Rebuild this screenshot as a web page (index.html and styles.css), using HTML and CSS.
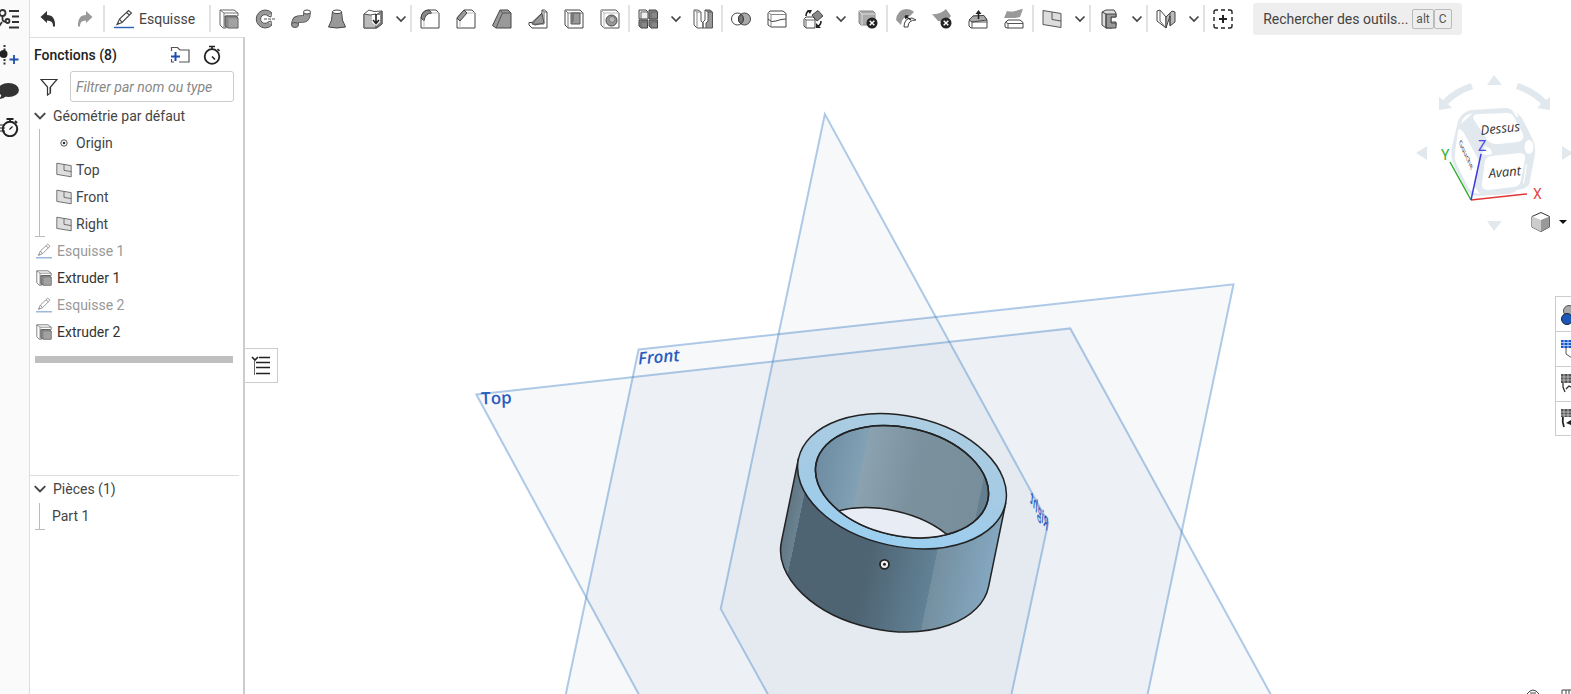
FILE: index.html
```html
<!DOCTYPE html>
<html lang="fr">
<head>
<meta charset="utf-8">
<title>Atelier de pièces</title>
<link rel="stylesheet" href="styles.css">
</head>
<body>
<svg class="defs" aria-hidden="true">
  <symbol id="chev" viewBox="0 0 12 12"><path d="M1.500 3.500 6 8l4.500-4.500" fill="none" stroke="#444" stroke-width="1.700"/></symbol>
  <symbol id="extrude" viewBox="0 0 20 20"><path d="M1 1h14l4 3v3H7v12H4l-3-3z" fill="#fff" stroke="#666"/><path d="M1 1l4 3h14M5 4v15" fill="none" stroke="#777"/><path d="M6 7h11l2 2v10H9l-3-2z" fill="#888" stroke="#555"/><path d="M9.500 9.500h9v9h-9z" fill="#a2a2a2"/></symbol>
  <symbol id="pencil" viewBox="0 0 20 20"><path d="M3 15.500 5.500 10 14.500 1.500l3 2.500L8 13.500z M5.500 10 8 13.500M12.500 3.500l3 2.500" fill="#fff" stroke="#444" stroke-width="1.100"/><path d="M3 15.500l1-2.500 1.500 1.500z" fill="#444"/><path d="M0 18.500h20" stroke="#2863b8" stroke-width="1.400"/></symbol>
  <symbol id="plane" viewBox="0 0 20 20"><path d="M1 1.500 19 4.500v14L1 15.500z" fill="#ddd" stroke="#555"/><path d="M10 3v7.500l9 1.500" fill="none" stroke="#555"/></symbol>
  <symbol id="xmark" viewBox="0 0 12 12"><circle cx="6" cy="6" r="5.500" fill="#222"/><path d="M3.700 3.700l4.600 4.600M8.300 3.700 3.700 8.300" stroke="#fff" stroke-width="1.400"/></symbol>
</svg>

<nav class="rail" aria-label="Panneaux">
  <button aria-label="Arbre"><svg width="20" height="20" viewBox="0 0 20 20" fill="none" stroke="#333" stroke-width="1.800"><circle cx="2.500" cy="4" r="3"/><path d="M2.500 7v3q0 3 4 2.500M-2 19l4-6"/><circle cx="7.500" cy="12" r="2"/><path d="M9 2h10M12 7.500h7M12 13h7M9 18.500h10"/></svg></button>
  <button aria-label="Ajouter une version"><svg width="20" height="20" viewBox="0 0 20 20"><path d="M4.500 0v20" stroke="#333" stroke-width="2" stroke-dasharray="2 1.500"/><circle cx="3.500" cy="9" r="4" fill="#222"/><path d="M9.500 14.500h9M14 10v9" stroke="#1b4fae" stroke-width="1.800"/></svg></button>
  <button aria-label="Commentaires"><svg width="20" height="20" viewBox="0 0 20 20"><ellipse cx="8.500" cy="9" rx="10.500" ry="7" fill="#333"/><path d="M1 13q1 3-3 5 6 0 8-3z" fill="#333"/></svg></button>
  <button aria-label="Historique"><svg width="20" height="20" viewBox="0 0 20 20" fill="none" stroke="#222"><circle cx="10" cy="12" r="7.200" stroke-width="2"/><path d="M6.500 2h7M10 2v3M15 4l2 2" stroke-width="1.800"/><path d="M9.500 12.500 12.500 9.500M0 8h5M-1 11h6M0 14h5" stroke-width="1.200"/></svg></button>
</nav>

<div class="app">
  <header class="toolbar">
    <div class="group history">
      <button class="tool" aria-label="Annuler"><svg viewBox="0 0 20 20"><path d="M2.500 8 9 2v4q8.500 0 8 11.500h-2q.5-6-6-6V14z" fill="#333"/></svg></button>
      <button class="tool" aria-label="Rétablir"><svg viewBox="0 0 20 20"><path d="M17.500 8 11 2v4q-8.500 0-8 11.500h2q-.5-6 6-6V14z" fill="#999"/></svg></button>
    </div>
    <div class="group sketch">
      <button class="sketch-btn"><svg viewBox="0 0 20 20"><use href="#pencil"/></svg>Esquisse</button>
    </div>
    <div class="group">
      <button class="tool" aria-label="Extruder"><svg viewBox="0 0 20 20"><use href="#extrude"/></svg></button>
      <button class="tool" aria-label="Révolution"><svg viewBox="0 0 20 20"><path d="M16.500 3.500A9 9 0 1 0 16.500 16.500L13 13A4.300 4.300 0 1 1 13 7z" fill="#999" stroke="#555"/><path d="M16.500 3.500l-.5 4.500-3-1M16.500 16.500l-.5-4.500-3 1" fill="#ddd" stroke="#555"/><path d="M9 10h11" stroke="#555" stroke-dasharray="3 1"/></svg></button>
      <button class="tool" aria-label="Balayage"><svg viewBox="0 0 20 20"><path d="M4 15.500c0-6 4-5.500 7-5.500 4 0 5-1 5-6" fill="none" stroke="#444" stroke-width="7.500"/><path d="M4 15.500c0-6 4-5.500 7-5.500 4 0 5-1 5-6" fill="none" stroke="#999" stroke-width="6"/><ellipse cx="16" cy="3" rx="3.500" ry="2" fill="#fff" stroke="#444"/><ellipse cx="4" cy="16" rx="3.500" ry="2.500" fill="#999" stroke="#555"/></svg></button>
      <button class="tool" aria-label="Lissage"><svg viewBox="0 0 20 20"><path d="M5.500 2.500Q5.500 12 1.500 18q8.500 2 17 0-4-6-4-15.500z" fill="#999" stroke="#444"/><ellipse cx="10" cy="2.800" rx="4.500" ry="1.800" fill="#fff" stroke="#444"/></svg></button>
      <button class="tool" aria-label="Épaissir"><svg viewBox="0 0 20 20"><path d="M1 5l5-4 5 1.500 8-.5v13l-5 4H1z" fill="#fff" stroke="#555"/><path d="M1 5l6 1 6-1v14H1z" fill="#bbb" stroke="#555"/><path d="M13 6l6-4v13l-6 4z" fill="#888" stroke="#555"/><path d="M9 6h8v7l-4 4-4-4z" fill="#fff"/><path d="M13 5v9M10 11l3 3.500 3-3.500" fill="none" stroke="#222" stroke-width="1.600"/></svg></button>
      <button class="more" aria-label="Plus"><svg viewBox="0 0 12 12"><use href="#chev"/></svg></button>
    </div>
    <div class="group">
      <button class="tool" aria-label="Congé"><svg viewBox="0 0 20 20"><path d="M1 19V9Q2 1 9 1h7l3 3v15z" fill="#fff" stroke="#444"/><path d="M1 9Q2 1 9 1l3 3Q5 4 4 12z" fill="#888" stroke="#444"/><path d="M11 4h8M4 11v8" stroke="#bbb"/></svg></button>
      <button class="tool" aria-label="Chanfrein"><svg viewBox="0 0 20 20"><path d="M1 19V9l7-8h8l3 3v15z" fill="#fff" stroke="#444"/><path d="M1 9l7-8 3 3-7 8z" fill="#999" stroke="#444"/><path d="M11 4h8M4 12v7" stroke="#bbb"/></svg></button>
      <button class="tool" aria-label="Dépouille"><svg viewBox="0 0 20 20"><path d="M.5 16.500 8 1h8l3 3v15H4z" fill="#999" stroke="#444"/><path d="M4 19 10.500 4H19M10.500 4 8 1" fill="none" stroke="#555"/></svg></button>
      <button class="tool" aria-label="Nervure"><svg viewBox="0 0 20 20"><path d="M14 1h2.500L19 3v16H4l-3-3v-2.500h3L14 4z" fill="#fff" stroke="#444"/><path d="M4 14.500 14 4.500l2 9.500-9 2z" fill="#999" stroke="#444"/><path d="M14 1l2 2.500V15H4M16 3h3" fill="none" stroke="#666"/></svg></button>
      <button class="tool" aria-label="Coque"><svg viewBox="0 0 20 20"><path d="M1 1h15l3 3v15H4l-3-3z" fill="#fff" stroke="#444"/><path d="M1 1l3 3h15M4 4v15" fill="none" stroke="#777"/><path d="M7 4h9v11H7z" fill="#999" stroke="#555"/><path d="M7 4h3v8l-3 3z" fill="#777"/></svg></button>
      <button class="tool" aria-label="Perçage"><svg viewBox="0 0 20 20"><path d="M1 1h15l3 3v15H4l-3-3z" fill="#fff" stroke="#555"/><path d="M1 1l3 3h15M4 4v15" fill="none" stroke="#bbb"/><circle cx="11.500" cy="11.500" r="5.500" fill="#999" stroke="#444"/><circle cx="12" cy="10.500" r="3" fill="#bbb" stroke="#777"/></svg></button>
    </div>
    <div class="group">
      <button class="tool" aria-label="Répétition linéaire"><svg viewBox="0 0 20 20"><path d="M1 1h7l2 2v7H1z" fill="#eee" stroke="#444"/><path d="M11 1h7l1.500 2v7H11zM1 11h8.500v8H3l-2-2zM11 11h8.500v8H13l-2-2z" fill="#888" stroke="#444"/><path d="M3 3h7M3 3v7M13 3h6M13 3v7M3 13h7M3 13v6M13 13h6M13 13v6" stroke="#666"/></svg></button>
      <button class="more" aria-label="Plus"><svg viewBox="0 0 12 12"><use href="#chev"/></svg></button>
      <button class="tool" aria-label="Symétrie"><svg viewBox="0 0 20 20"><path d="M1 1h4l3 2v9l2 2v5H4l-3-3z" fill="#fff" stroke="#555"/><path d="M1 1l3 2h4M4 3v16" fill="none" stroke="#888"/><path d="M12 1h5l2.500 2v16H13v-5l2-2V3z" fill="#999" stroke="#555"/><path d="M12 1v10l-2 2v6h3M15 3h4" fill="none" stroke="#555"/></svg></button>
    </div>
    <div class="group">
      <button class="tool" aria-label="Booléen"><svg viewBox="0 0 20 20"><circle cx="6.500" cy="10" r="6" fill="#fff" stroke="#444"/><circle cx="13.500" cy="10" r="6" fill="#aaa" stroke="#444"/><path d="M10 5.100a6 6 0 0 1 0 9.800 6 6 0 0 1 0-9.800z" fill="#777" stroke="#333"/></svg></button>
      <button class="tool" aria-label="Diviser"><svg viewBox="0 0 20 20"><path d="M1 4l2-2h13l3 2.500V18H4l-3-2z" fill="#fff" stroke="#444"/><path d="M1 3l3 2.500h15M4 5v13" fill="none" stroke="#888"/><path d="M1 10q3 4 8 2t10-2" fill="none" stroke="#444"/></svg></button>
      <button class="tool" aria-label="Transformer"><svg viewBox="0 0 20 20"><path d="M1 10l2-2h7l2 2v9H3l-2-2z" fill="#fff" stroke="#444"/><path d="M1 9l2 2h9M3 11v8" fill="none" stroke="#666"/><path d="M9 6l6-4.500L20 7l-6 5z" fill="#888" stroke="#444"/><path d="M3 7q0-4 3-5" fill="none" stroke="#222" stroke-width="1.600"/><path d="M4 1h5L7 5z" fill="#222"/><path d="M18 12q0 4-3 5" fill="none" stroke="#222" stroke-width="1.600"/><path d="M13 14v5h5z" fill="#222"/></svg></button>
      <button class="more" aria-label="Plus"><svg viewBox="0 0 12 12"><use href="#chev"/></svg></button>
      <button class="tool" aria-label="Supprimer la pièce"><svg viewBox="0 0 20 20"><path d="M1 2h14l2 2v12H3l-2-2z" fill="#aaa" stroke="#888"/><path d="M1 2l3 3h13M4 5v11" fill="none" stroke="#ddd"/><use href="#xmark" x="8" y="8" width="12" height="12"/></svg></button>
    </div>
    <div class="group">
      <button class="tool" aria-label="Modifier le congé"><svg viewBox="0 0 20 20"><path d="M0 11Q1 1 10 0q5 0 8 3l-4 4Q6 7 5 16z" fill="#999"/><path d="M8 18q0-9 8-9l4 2q-8 0-8 7z" fill="#fff" stroke="#444"/><path d="M15 11 9 7M9 7h3.500M9 7l1 3" fill="none" stroke="#222" stroke-width="1.300"/></svg></button>
      <button class="tool" aria-label="Supprimer la face"><svg viewBox="0 0 20 20"><path d="M0 5Q8 6 14 0l5 7q-5 7-13 5z" fill="#999"/><use href="#xmark" x="8" y="8" width="12" height="12"/></svg></button>
      <button class="tool" aria-label="Déplacer la face"><svg viewBox="0 0 20 20"><path d="M1 12l4-5h11l3 4v8H3l-2-2z" fill="#fff" stroke="#444"/><path d="M1 11l4-4 11-.5 3 4.500-15 2z" fill="#aaa" stroke="#444"/><path d="M4 13v6M4 13h15" stroke="#555"/><path d="M10.500 10V3" stroke="#222" stroke-width="1.600"/><path d="M7.500 5l3-4 3 4z" fill="#222"/></svg></button>
      <button class="tool" aria-label="Remplacer la face"><svg viewBox="0 0 20 20"><path d="M3 2q5 1 8 0t8-2l-3 8q-4 1-8 1T0 9z" fill="#999"/><path d="M1 14l3-3h12l3 2.500V19H3l-2-1z" fill="#fff" stroke="#444"/><path d="M1 13l3 1.500h15M4 14v5" fill="none" stroke="#555"/></svg></button>
    </div>
    <div class="group">
      <button class="tool" aria-label="Plan"><svg viewBox="0 0 20 20"><use href="#plane"/></svg></button>
      <button class="more" aria-label="Plus"><svg viewBox="0 0 12 12"><use href="#chev"/></svg></button>
    </div>
    <div class="group">
      <button class="tool" aria-label="Tôlerie"><svg viewBox="0 0 20 20"><path d="M3 3l4-2h8l2 3v4h-5v5h5v4l-4 2H7l-4-3z" fill="#ddd" stroke="#444"/><path d="M7 5h10v3h-5v6h5v5H7z" fill="#999" stroke="#444"/><path d="M3 3l4 2v14" fill="none" stroke="#444"/></svg></button>
      <button class="more" aria-label="Plus"><svg viewBox="0 0 12 12"><use href="#chev"/></svg></button>
    </div>
    <div class="group">
      <button class="tool" aria-label="Cadre"><svg viewBox="0 0 20 20"><path d="M1 2l3-1 6 7v11l-9-7z" fill="#fff" stroke="#444"/><path d="M4 1v11l6 7" fill="none" stroke="#666"/><path d="M10 8l6-6 3 1v10l-5 4V7l-4 12z" fill="#bbb" stroke="#444"/><path d="M14 4v12" stroke="#444"/></svg></button>
      <button class="more" aria-label="Plus"><svg viewBox="0 0 12 12"><use href="#chev"/></svg></button>
    </div>
    <div class="group last">
      <button class="tool" aria-label="Fonction personnalisée"><svg viewBox="0 0 20 20" fill="none" stroke="#222"><path d="M1 5V3q0-2 2-2h2M8 1h4M15 1h2q2 0 2 2v2M19 8v4M19 15v2q0 2-2 2h-2M12 19H8M5 19H3q-2 0-2-2v-2M1 12V8" stroke-width="1.400"/><path d="M6 10h8M10 6v8" stroke-width="2"/></svg></button>
    </div>
    <button class="search">Rechercher des outils...<span class="keys"><kbd>alt</kbd><kbd>C</kbd></span></button>
  </header>

  <div class="work">
    <aside class="panel">
      <section class="features">
        <div class="head">
          <h2>Fonctions (8)</h2>
          <button aria-label="Nouveau dossier"><svg width="20" height="20" viewBox="0 0 20 20" fill="none"><path d="M1.500 6V2.500h6L10 5h9v12H9M1.500 14v3H4" stroke="#555" stroke-width="1.200"/><path d="M1 11.500h9M5.500 7v9" stroke="#1b4fae" stroke-width="2"/></svg></button>
          <button aria-label="Chronomètre"><svg width="20" height="20" viewBox="0 0 20 20" fill="none" stroke="#222"><circle cx="10" cy="11.500" r="7.300" stroke-width="1.800"/><path d="M7 1.500h6M10 1.500V4M15.500 4l2 2M10 11.500l3 3" stroke-width="1.600"/></svg></button>
        </div>
        <div class="filter">
          <button aria-label="Filtrer"><svg width="18" height="18" viewBox="0 0 18 18"><path d="M1 1.500h16l-6.500 7.500v6l-3 2V9z" fill="#fff" stroke="#333" stroke-width="1.200"/><path d="M9 9h1v6l-1 1z" fill="#999"/></svg></button>
          <input type="text" placeholder="Filtrer par nom ou type" aria-label="Filtrer par nom ou type">
        </div>
        <div class="row title"><svg viewBox="0 0 12 12"><use href="#chev"/></svg>Géométrie par défaut</div>
        <ul class="branch">
          <li class="row"><svg viewBox="0 0 16 16"><circle cx="8" cy="8" r="3.200" fill="#fff" stroke="#555"/><circle cx="8" cy="8" r="1.300" fill="#333"/></svg>Origin</li>
          <li class="row"><svg viewBox="0 0 20 20"><use href="#plane"/></svg>Top</li>
          <li class="row"><svg viewBox="0 0 20 20"><use href="#plane"/></svg>Front</li>
          <li class="row"><svg viewBox="0 0 20 20"><use href="#plane"/></svg>Right</li>
        </ul>
        <ul class="steps">
          <li class="row muted"><svg viewBox="0 0 20 20"><use href="#pencil"/></svg>Esquisse 1</li>
          <li class="row"><svg viewBox="0 0 20 20"><use href="#extrude"/></svg>Extruder 1</li>
          <li class="row muted"><svg viewBox="0 0 20 20"><use href="#pencil"/></svg>Esquisse 2</li>
          <li class="row"><svg viewBox="0 0 20 20"><use href="#extrude"/></svg>Extruder 2</li>
        </ul>
        <div class="rollback"></div>
      </section>
      <section class="parts">
        <div class="row title"><svg viewBox="0 0 12 12"><use href="#chev"/></svg>Pièces (1)</div>
        <ul class="branch"><li class="row">Part 1</li></ul>
      </section>
    </aside>

    <main class="stage">
      <svg class="scene" viewBox="244 38 1327 656" preserveAspectRatio="xMinYMin slice">
        <defs>
          <linearGradient id="outer" gradientUnits="userSpaceOnUse" x1="796" y1="459" x2="1004" y2="502">
            <stop offset="0" stop-color="#607684"/><stop offset=".064" stop-color="#6b8290"/><stop offset=".064" stop-color="#4e6473"/><stop offset=".42" stop-color="#4e6473"/><stop offset=".73" stop-color="#628195"/><stop offset=".73" stop-color="#748f9f"/><stop offset="1" stop-color="#84a7c0"/>
          </linearGradient>
          <linearGradient id="inner" gradientUnits="userSpaceOnUse" x1="796" y1="459" x2="1004" y2="502" gradientTransform="rotate(-12.300 900 482)">
            <stop offset=".08" stop-color="#6d8ba1"/><stop offset=".302" stop-color="#82a1b5"/><stop offset=".304" stop-color="#8ba2b1"/><stop offset=".55" stop-color="#7c919e"/><stop offset=".872" stop-color="#798e9b"/><stop offset=".876" stop-color="#647f90"/>
          </linearGradient>
          <linearGradient id="rim" x1="0" y1="0" x2="0" y2="1"><stop offset="0" stop-color="#accde2"/><stop offset=".6" stop-color="#a3cae5"/><stop offset="1" stop-color="#9bcff0"/></linearGradient>
          <clipPath id="bore"><ellipse cx="900" cy="482" rx="87.700" ry="54" transform="rotate(12.300 900 482)"/></clipPath>
        </defs>
        <g class="planes">
          <path d="M475 395 1068 329 1274 705H643z"/>
          <path d="M637 350 1231 285 1143 705H562z"/>
          <path d="M823 115 1046 523 1007 705H772L719 609z"/>
        </g>
        <g stroke="#222" stroke-width="1.500">
          <path d="M796.500 459.500 779.500 542.500A105.800 65.100 12.300 0 0 986.500 586.500L1003.500 503.500z" fill="url(#outer)"/>
          <ellipse cx="900" cy="481.500" rx="105.800" ry="65.100" transform="rotate(12.300 900 481.500)" fill="url(#rim)"/>
          <ellipse cx="900" cy="482" rx="87.700" ry="54" transform="rotate(12.300 900 482)" fill="url(#inner)"/>
          <g clip-path="url(#bore)"><ellipse cx="882" cy="564" rx="87.700" ry="54" transform="rotate(12.300 882 564)" fill="#e8ecf4"/></g>
          <ellipse cx="900" cy="482" rx="87.700" ry="54" transform="rotate(12.300 900 482)" fill="none"/>
        </g>
        <circle cx="882.500" cy="564.500" r="4.500" fill="#eee" stroke="#222" stroke-width="1.800"/><circle cx="882.500" cy="564.500" r="1.500" fill="#222"/>
        <g class="plane-names">
          <text transform="translate(637 365) rotate(-5)">Front</text>
          <text class="upright" transform="translate(480 405) rotate(-2)">Top</text>
          <text class="small" transform="matrix(-.5 -.87 -.2 .98 1045 532)">Right</text>
        </g>
      </svg>

      <svg class="viewcube" width="160" height="170" viewBox="1411 68 160 170" role="img" aria-label="Cube de vue">
        <g fill="#e1e8ee">
          <path d="M1494 76l8 10h-15zM1494 232l8-10h-15zM1416 154l11-7v14zM1573 154l-11-7v14z"/>
          <path d="M1439 98v13l13-2-4-4q10-10 25-15l-2-6q-18 6-28 17z"/>
          <path d="M1550 98v13l-13-2 4-4q-10-10-25-15l2-6q18 6 28 17z"/>
          <path d="M1458 122q4-9 13-11l34-2q6 0 9 4l4 2q4 3 6 8l9 18q3 7 2 14l-5 27q-1 6-7 8l-6 1q-3 3-9 4l-29 2q-10 0-14-8l-10-20q-5-10-3-21z"/>
        </g>
        <g fill="#fff">
          <path d="M1474 121q-3-5 4-6l29-1q5 0 7 4l9 17q2 6-5 8l-19 2q-9 1-13-6z"/>
          <path d="M1485 162q1-4 6-5l29-3q6 0 5 6l-4 21q-1 6-7 7l-26 3q-7 0-6-7z"/>
          <path d="M1458 132q1-5 6 2l13 24q2 4 1 8l-4 22q-2 7-6 0l-12-24q-2-5-1-10z"/>
          <path d="M1461 125l12-11-6 2q-5 3-6 9zM1458 160l10 20-5-3zM1468 188l6 6 6 1-5-7z"/>
          <ellipse cx="1529" cy="148" rx="4.500" ry="7"/><path d="M1485 147q7 2 7 8-5 2-10 0zM1512 111l5 8 1-3zM1523 184l3-20 1 2-3 19z"/>
        </g>
        <g class="faces">
          <text transform="translate(1481 136) rotate(-6)">Dessus</text>
          <text transform="translate(1489 179) rotate(-5)">Avant</text>
          <text class="side" transform="matrix(.42 .9 -.2 .98 1459 145)">Gauche</text>
        </g>
        <g fill="none" stroke-width="1.500"><path d="M1471 201 1527 195" stroke="#e03636"/><path d="M1471 201 1450 163" stroke="#2fb02f"/><path d="M1471 201 1481 155" stroke="#3c3ce0"/></g>
        <g class="axes"><text x="1533" y="200" fill="#e04848">X</text><text x="1441" y="161" fill="#2fb02f">Y</text><text x="1478" y="152" fill="#4848e0">Z</text></g>
      </svg>

      <button class="shade" aria-label="Mode d'affichage"><svg width="41" height="22" viewBox="0 0 41 22"><path d="M2 5.500 11 1.500l8.500 4V16L11 20.500 2 16z" fill="#fff" stroke="#333"/><path d="M2 5.500 11 9v11.500L2 16z" fill="#ccc"/><path d="M11 9l8.500-3.500V16L11 20.500z" fill="#999"/><path d="M29 9h8l-4 4z" fill="#111"/></svg></button>

      <div class="side-tabs">
        <button aria-label="Apparences"><svg width="16" height="34" viewBox="0 0 16 34"><circle cx="14" cy="14" r="5.500" fill="#aaa" stroke="#555"/><circle cx="12" cy="22" r="5.500" fill="#1c57b8" stroke="#123"/></svg></button>
        <button aria-label="Configurations"><svg width="16" height="34" viewBox="0 0 16 34"><path d="M11 15v7l6 4M11 16l5-2" fill="none" stroke="#555"/><path d="M6 8h12v8H6z" fill="#1c57c8"/><path d="M6 10.500h11M6 13.500h11M9 8v8M13 8v8" stroke="#cfe0ff" stroke-width=".8"/></svg></button>
        <button aria-label="Nomenclature"><svg width="16" height="34" viewBox="0 0 16 34"><path d="M8 16v4l2 5M11 22l3-3 4 2" fill="none" stroke="#333" stroke-width="1.300"/><path d="M6 7h12v9H6z" fill="#555"/><path d="M6 10h11M6 13h11M9 7v9M13 7v9" stroke="#ccc" stroke-width=".8"/></svg></button>
        <button aria-label="Variables"><svg width="16" height="33" viewBox="0 0 16 33"><path d="M8 14q-1 6 1 11" fill="none" stroke="#222" stroke-width="1.800"/><path d="M11 21l5-3v5z" fill="#222"/><path d="M6 7h12v8H6z" fill="#555"/><path d="M6 10h11M6 13h11M9 7v8M13 7v8" stroke="#ccc" stroke-width=".8"/></svg></button>
      </div>

      <button class="fold" aria-label="Replier la liste"><svg width="20" height="20" viewBox="0 0 20 20" fill="none" stroke="#222"><path d="M1 1l3 3 3-3" stroke-width="1.600"/><path d="M8 1.500h11M5 6.500h14M5 11.500h14M5 17.500h14" stroke-width="1.400"/><path d="M3.500 5v14" stroke="#666"/></svg></button>
      <svg class="corner" width="48" height="5" viewBox="0 0 48 5" fill="none" stroke="#444"><path d="M4 5q6-8 12 0M7 4h6" /><path d="M39 6V1h10M43 1v5M46 1v5"/></svg>
    </main>
  </div>
</div>
</body>
</html>
```

FILE: styles.css
```css
* { box-sizing: border-box; }
body {
  margin: 0;
  height: 100vh;
  display: flex;
  overflow: hidden;
  background: #fff;
  color: #444;
  font: 14px/20px Roboto, "Liberation Sans", sans-serif;
}
button {
  padding: 0;
  border: 0;
  background: none;
  color: inherit;
  font: inherit;
}
button svg { display: block; }
ul { margin: 0; padding: 0; list-style: none; }
.defs { position: absolute; width: 0; height: 0; }

.rail {
  flex: 0 0 30px;
  display: flex;
  flex-direction: column;
  align-items: flex-start;
  gap: 16px;
  padding-top: 9px;
  background: #fafafa;
  border-right: 1px solid #ddd;
}
.app { flex: 1; min-width: 0; display: flex; flex-direction: column; }

.toolbar { flex: 0 0 37px; display: flex; align-items: center; white-space: nowrap; }
.group { display: flex; align-items: center; height: 27px; border-left: 2px solid #e2e2e2; }
.history { border-left: 0; }
.tool, .more { display: flex; align-items: center; justify-content: center; height: 27px; }
.tool { width: 36px; }
.tool svg { width: 20px; height: 20px; }
.more { width: 19px; }
.more svg { width: 12px; height: 12px; }
.history .tool:last-child { width: 37px; }
.sketch-btn { display: flex; align-items: center; gap: 5px; padding: 0 14px 0 9px; }
.sketch-btn svg { width: 20px; height: 20px; }
.search {
  display: flex;
  align-items: center;
  gap: 4px;
  height: 32px;
  margin-left: 12px;
  padding: 0 10px;
  border-radius: 3px;
  background: #eee;
}
.keys { display: flex; }
kbd {
  min-width: 18px;
  padding: 0 3px;
  border: 1px solid #bbb;
  border-radius: 2px;
  font: 12px/18px Roboto, "Liberation Sans", sans-serif;
  color: #555;
  text-align: center;
}

.work { flex: 1; min-height: 0; display: flex; }
.panel {
  flex: 0 0 215px;
  min-width: 0;
  display: flex;
  flex-direction: column;
  border-top: 1px solid #ddd;
  border-right: 2px solid #ccc;
}
.features { flex: 2 1 0; min-height: 0; }
.parts { flex: 1 1 0; min-height: 0; margin-right: 4px; border-top: 1px solid #ddd; }
.head { display: flex; align-items: center; gap: 12px; height: 33px; padding: 0 21px 0 4px; }
h2 { flex: 1; margin: 0; font-size: 14px; font-weight: 500; color: #222; }
.filter { display: flex; align-items: center; gap: 12px; padding: 0 9px 0 10px; }
input {
  flex: 1;
  width: 100%;
  min-width: 0;
  height: 31px;
  padding: 0 5px;
  border: 1px solid #ccc;
  border-radius: 3px;
  color: #333;
  font: italic 14px/20px Roboto, "Liberation Sans", sans-serif;
}
input::placeholder { color: #888; }
.row { display: flex; align-items: center; gap: 4px; height: 27px; }
.row svg { width: 16px; height: 16px; }
.title { gap: 6px; padding-left: 3px; }
.title svg { width: 14px; height: 14px; }
.branch { position: relative; margin-left: 9px; padding-left: 16px; border-left: 1px solid #bbb; }
.branch::after { content: ""; position: absolute; left: -5px; bottom: 0; width: 10px; border-bottom: 1px solid #bbb; }
.parts .branch { padding-left: 12px; }
.steps { padding-left: 6px; }
.steps .row { gap: 5px; color: #333; }
.steps .muted { color: #999; }
.muted svg { opacity: .6; }
.rollback { height: 7px; margin: 11px 10px 0 5px; background: #bfbfbf; }

.stage { position: relative; flex: 1; min-width: 0; overflow: hidden; }
.scene { display: block; width: 100%; height: 100%; }
.planes { fill: rgba(70, 110, 150, .05); stroke: rgba(80, 140, 205, .45); stroke-width: 2; }
.plane-names { fill: #2a5cc0; font: italic 600 17px "Open Sans", sans-serif; }
.plane-names .upright { font-style: normal; }
.plane-names .small { font-size: 15px; }
.viewcube { position: absolute; top: 30px; right: 0; }
.faces { fill: #333; font: italic 500 13px "Open Sans", sans-serif; }
.faces .side { font-size: 9px; }
.axes { font: 14px Roboto, sans-serif; }
.shade { position: absolute; top: 174px; right: 0; }
.side-tabs {
  position: absolute;
  top: 259px;
  right: 0;
  display: flex;
  flex-direction: column;
  border: solid #ccc;
  border-width: 1px 0 0 1px;
  background: #fff;
}
.side-tabs button { border-bottom: 1px solid #ccc; }
.side-tabs svg { margin-left: -1px; }
.fold {
  position: absolute;
  top: 311px;
  left: -1px;
  padding: 7px 6px 6px 7px;
  border: 1px solid #ccc;
  border-left: 0;
  background: #fff;
}
.corner { position: absolute; right: 0; bottom: 0; }
```
